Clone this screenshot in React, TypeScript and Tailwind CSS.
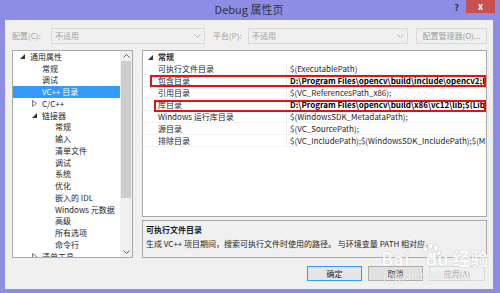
const tree = [
  { t: '通用属性', lv: 0, a: 'open' },
  { t: '常规', lv: 1 },
  { t: '调试', lv: 1 },
  { t: 'VC++ 目录', lv: 1, sel: true },
  { t: 'C/C++', lv: 1, a: 'closed' },
  { t: '链接器', lv: 1, a: 'open' },
  { t: '常规', lv: 2 },
  { t: '输入', lv: 2 },
  { t: '清单文件', lv: 2 },
  { t: '调试', lv: 2 },
  { t: '系统', lv: 2 },
  { t: '优化', lv: 2 },
  { t: '嵌入的 IDL', lv: 2 },
  { t: 'Windows 元数据', lv: 2 },
  { t: '高级', lv: 2 },
  { t: '所有选项', lv: 2 },
  { t: '命令行', lv: 2 },
  { t: '清单工具', lv: 1, a: 'closed' },
]

const props = [
  { n: '可执行文件目录', v: '$(ExecutablePath)' },
  { n: '包含目录', v: 'D:\\Program Files\\opencv\\build\\include\\opencv2;D:\\Program Files\\opencv\\build\\include', b: true },
  { n: '引用目录', v: '$(VC_ReferencesPath_x86);' },
  { n: '库目录', v: 'D:\\Program Files\\opencv\\build\\x86\\vc12\\lib;$(LibraryPath)', b: true },
  { n: 'Windows 运行库目录', v: '$(WindowsSDK_MetadataPath);' },
  { n: '源目录', v: '$(VC_SourcePath);' },
  { n: '排除目录', v: '$(VC_IncludePath);$(WindowsSDK_IncludePath);$(MSBuild_ExecutablePath);' },
]

function Arrow({ kind }: { kind?: string }) {
  if (kind === 'open')
    return (
      <svg width="5" height="5" viewBox="0 0 5 5">
        <path d="M5 0 L5 5 L0 5 Z" fill="#333" />
      </svg>
    )
  if (kind === 'closed')
    return (
      <svg width="5" height="7" viewBox="0 0 5 7">
        <path d="M0.5 0.5 L4.5 3.5 L0.5 6.5 Z" fill="none" stroke="#777" strokeWidth="1" />
      </svg>
    )
  return null
}

function Chevron({ up, color = '#999' }: { up?: boolean; color?: string }) {
  return (
    <svg width="7" height="4" viewBox="0 0 7 4">
      <path d={up ? 'M0.5 3.5 L3.5 0.5 L6.5 3.5' : 'M0.5 0.5 L3.5 3.5 L6.5 0.5'} fill="none" stroke={color} strokeWidth="1" />
    </svg>
  )
}

export default function App() {
  return (
    <div className="w-[500px] h-[293px] bg-[#8d8de6] flex flex-col pl-[5px] pr-[7px] pb-[4px] font-['Noto_Sans_CJK_SC',sans-serif] overflow-hidden">
      {/* title bar */}
      <div className="h-[20px] relative flex items-center justify-center">
        <span className="text-[11px] text-[#333] leading-none -mt-[1px]">Debug 属性页</span>
        <span className="absolute right-[34px] top-[3px] text-[9px] font-bold text-[#333] leading-none">?</span>
        <div className="absolute -right-[2px] top-0 w-[29px] h-[13px] bg-[#c75050] flex items-center justify-center">
          <span className="text-white text-[9px] font-bold leading-none -mt-[1px]">x</span>
        </div>
      </div>

      {/* client */}
      <div className="flex-1 bg-[#f0f0f0] relative flex flex-col text-[8px] leading-none">
        {/* config row */}
        <div className="flex items-center h-[16px] mt-[8px] pl-[7px] text-[#a0a0a0]">
          <span className="w-[39px]">配置(C):</span>
          <div className="w-[154px] h-[16px] border border-[#d9d9d9] bg-[#f0f0f0] flex items-center justify-between px-[3px]">
            <span>不适用</span>
            <Chevron color="#b0b0b0" />
          </div>
          <span className="ml-[8px] w-[35px]">平台(P):</span>
          <div className="w-[160px] h-[16px] border border-[#d9d9d9] bg-[#f0f0f0] flex items-center justify-between px-[3px]">
            <span>不适用</span>
            <Chevron color="#b0b0b0" />
          </div>
          <div className="ml-[8px] w-[71px] h-[16px] border border-[#d9d9d9] bg-[#f0f0f0] flex items-center justify-center">
            配置管理器(O)...
          </div>
        </div>

        {/* body */}
        <div className="flex mt-[6px] pl-[7px] gap-[9px]">
          {/* tree */}
          <div className="w-[121px] h-[208px] border border-[#a9a9a9] bg-white flex overflow-hidden">
            <div className="flex-1 overflow-hidden">
              {tree.map((r, i) => (
                <div
                  key={i}
                  className={
                    'h-[11.75px] flex items-center whitespace-nowrap ' +
                    (r.sel ? 'bg-[#3399ff] text-white ' : 'text-[#1e1e1e] ') +
                    (r.lv === 0 ? 'pl-[7px]' : r.lv === 1 ? 'pl-[19px]' : 'pl-[32px]')
                  }
                >
                  <span className="w-[10px] flex items-center">
                    <Arrow kind={r.a} />
                  </span>
                  <span>{r.t}</span>
                </div>
              ))}
            </div>
            <div className="w-[12px] bg-[#f0f0f0] flex flex-col items-center">
              <div className="h-[10px] flex items-center">
                <Chevron up color="#606060" />
              </div>
              <div className="w-[10px] h-[137px] bg-[#cdcdcd]" />
              <div className="flex-1" />
              <div className="h-[10px] flex items-center">
                <Chevron color="#606060" />
              </div>
            </div>
          </div>

          {/* right column */}
          <div className="w-[345px] flex flex-col gap-[3px]">
            <div className="h-[167px] border border-[#a9a9a9] bg-white relative overflow-hidden text-[#1e1e1e]">
              <div className="h-[12px] flex items-center pl-[5px]">
                <span className="w-[10px] flex items-center">
                  <Arrow kind="open" />
                </span>
                <span className="font-bold">常规</span>
              </div>
              {props.map((p, i) => (
                <div key={i} className="h-[12px] flex border-b border-[#f4f4f4]">
                  <div className="w-[144px] pl-[15px] flex items-center whitespace-nowrap border-r border-[#ececec]">
                    {p.n}
                  </div>
                  <div className={'flex-1 pl-[3px] flex items-center whitespace-nowrap overflow-hidden ' + (p.b ? 'font-bold text-black' : '')}>
                    {p.v}
                  </div>
                </div>
              ))}
              {/* red annotation boxes */}
              <div className="absolute left-[7px] right-0 top-[24px] h-[12px] border-2 border-[#e81010]" />
              <div className="absolute left-[11px] right-0 top-[49px] h-[12px] border-2 border-[#e81010]" />
            </div>
            <div className="h-[38px] border border-[#a9a9a9] bg-[#f0f0f0] px-[3px] pt-[3px] text-[#1e1e1e]">
              <div className="font-bold h-[11px] flex items-center">可执行文件目录</div>
              <div className="mt-[3px] h-[11px] flex items-center whitespace-nowrap">
                生成 VC++ 项目期间，搜索可执行文件时使用的路径。 与环境变量 PATH 相对应。
              </div>
            </div>
          </div>
        </div>

        {/* buttons */}
        <div className="flex justify-end gap-[6px] mt-[8px] pr-[8px]">
          <div className="w-[55px] h-[15px] border border-[#3399ff] bg-[#e5e5e5] flex items-center justify-center text-[#1e1e1e]">确定</div>
          <div className="w-[55px] h-[15px] border border-[#adadad] bg-[#e1e1e1] flex items-center justify-center text-[#1e1e1e]">取消</div>
          <div className="w-[56px] h-[15px] border border-[#d9d9d9] bg-[#f0f0f0] flex items-center justify-center text-[#a0a0a0]">应用(A)</div>
        </div>

        {/* watermark */}
        <div className="absolute left-[376px] top-[223px] w-[108px] h-[42px] pointer-events-none opacity-80">
          <svg width="24" height="18" viewBox="0 0 26 22" className="absolute left-[38px] top-0">
            <g fill="#fff" stroke="#c8c8c8" strokeWidth="0.9">
              <ellipse cx="6" cy="7" rx="3" ry="4" />
              <ellipse cx="12" cy="4" rx="3" ry="4" />
              <ellipse cx="19" cy="6" rx="3" ry="4" />
              <ellipse cx="22.5" cy="12.5" rx="2.5" ry="3" />
              <path d="M7 20 C7 14 11 11 14 11 C18 11 21 15 20 20 C19 22 9 22 7 20 Z" />
            </g>
          </svg>
          <span className="absolute left-0 top-[6px] text-[18px] font-bold text-white leading-none whitespace-nowrap [text-shadow:0_0_1px_#999]">
            Bai<span className="ml-[16px]">du</span> 经验
          </span>
          <span className="absolute left-[2px] top-[28px] text-[10px] text-white leading-none whitespace-nowrap [text-shadow:0_0_1px_#aaa]">jingyan.baidu.com</span>
        </div>
      </div>
    </div>
  )
}
